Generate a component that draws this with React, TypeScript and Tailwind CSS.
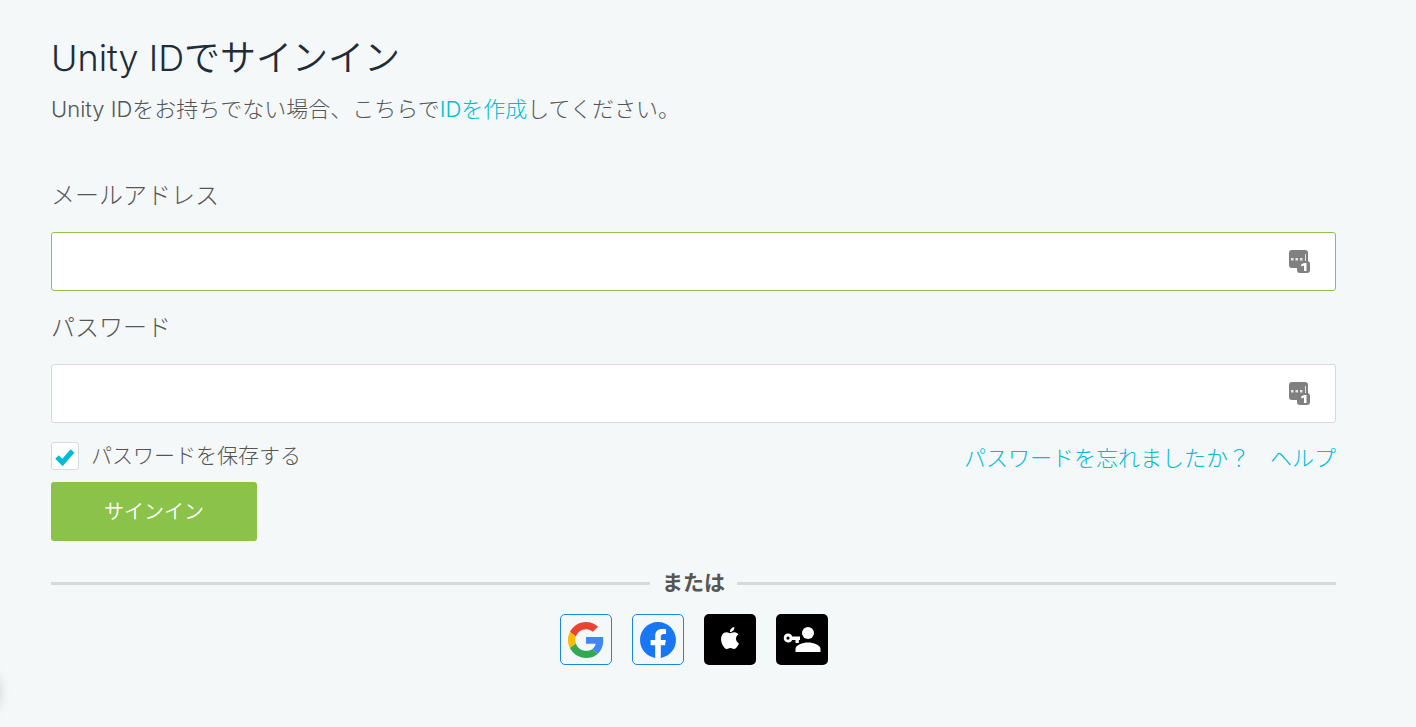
import React, { useState } from 'react';

const PasswordManagerIcon: React.FC = () => (
  <svg width="22" height="24" viewBox="0 0 22 24" aria-hidden="true">
    <path
      d="M3 0h13a3 3 0 0 1 3 3v8h0a3 3 0 0 1 2 3v6a3 3 0 0 1-3 3h-7a3 3 0 0 1-3-3v-2H3a3 3 0 0 1-3-3V3a3 3 0 0 1 3-3z"
      fill="#808080"
    />
    <path d="M2 8h2.500v2.500H2zM6.500 8H9v2.500H6.500zM11 8h2.500v2.500H11zM16 4h1v7h-1z" fill="#e6e6e6" />
    <path d="M12 14.500L15 13h2.500v8h-2.500v-5.500l-2.500 1z" fill="#ffffff" />
  </svg>
);

const GoogleIcon: React.FC = () => (
  <svg width="36" height="36" viewBox="0 0 48 48" aria-hidden="true">
    <path fill="#EA4335" d="M24 9.500c3.540 0 6.710 1.220 9.210 3.600l6.850-6.850C35.900 2.380 30.470 0 24 0 14.620 0 6.510 5.380 2.560 13.220l7.980 6.190C12.430 13.720 17.740 9.500 24 9.500z" />
    <path fill="#4285F4" d="M46.980 24.550c0-1.570-.15-3.090-.38-4.550H24v9.020h12.940c-.58 2.960-2.260 5.480-4.780 7.180l7.730 6c4.510-4.180 7.090-10.360 7.090-17.650z" />
    <path fill="#FBBC05" d="M10.530 28.590c-.48-1.450-.76-2.990-.76-4.590s.27-3.140.76-4.590l-7.980-6.190C.92 16.460 0 20.120 0 24c0 3.880.92 7.540 2.560 10.780l7.970-6.190z" />
    <path fill="#34A853" d="M24 48c6.480 0 11.930-2.130 15.890-5.810l-7.730-6c-2.150 1.450-4.920 2.300-8.160 2.300-6.260 0-11.570-4.220-13.470-9.910l-7.980 6.190C6.510 42.620 14.620 48 24 48z" />
  </svg>
);

const FacebookIcon: React.FC = () => (
  <svg width="36" height="36" viewBox="0 0 24 24" aria-hidden="true">
    <circle cx="12" cy="12" r="11.500" fill="#ffffff" />
    <path
      fill="#1877F2"
      d="M24 12.073C24 5.405 18.627 0 12 0S0 5.405 0 12.073C0 18.100 4.388 23.094 10.125 24v-8.437H7.078v-3.490h3.047v-2.660c0-3.025 1.792-4.697 4.533-4.697 1.312 0 2.686.236 2.686.236v2.971H15.830c-1.491 0-1.956.93-1.956 1.886v2.264h3.328l-.532 3.490h-2.796V24C19.612 23.094 24 18.100 24 12.073z"
    />
  </svg>
);

const AppleIcon: React.FC = () => (
  <svg width="22" height="22" viewBox="0 0 24 24" aria-hidden="true">
    <path
      fill="#ffffff"
      d="M12.152 6.896c-.948 0-2.415-1.078-3.960-1.040-2.040.027-3.910 1.183-4.961 3.014-2.117 3.675-.546 9.103 1.519 12.090 1.013 1.454 2.208 3.090 3.792 3.039 1.520-.065 2.090-.987 3.935-.987 1.831 0 2.350.987 3.960.948 1.637-.026 2.676-1.480 3.676-2.948 1.156-1.688 1.636-3.325 1.662-3.415-.039-.013-3.182-1.221-3.220-4.857-.026-3.040 2.480-4.494 2.597-4.559-1.429-2.090-3.623-2.324-4.390-2.376-2-.156-3.675 1.090-4.610 1.090zM15.530 3.830c.843-1.012 1.400-2.427 1.245-3.830-1.207.052-2.662.805-3.532 1.818-.78.896-1.454 2.338-1.273 3.714 1.338.104 2.715-.688 3.559-1.701"
    />
  </svg>
);

const PasskeyIcon: React.FC = () => (
  <svg width="38" height="26" viewBox="0 0 38 26" fill="#ffffff" aria-hidden="true">
    <circle cx="25" cy="6" r="6" />
    <path d="M12.500 25v-3c0-4 7-6.500 12.500-6.500s12.500 2.500 12.500 6.500v3z" />
    <path
      fillRule="evenodd"
      d="M5 6.500a4.500 4.500 0 0 1 4.300 3H17v3.500h-1.200V16h-3.300v-3H9.300A4.500 4.500 0 1 1 5 6.500zm0 3a1.600 1.600 0 1 0 0 3.200 1.600 1.600 0 0 0 0-3.200z"
    />
  </svg>
);

const providers = [
  { name: 'Google', icon: <GoogleIcon />, style: 'border border-[#1a86e8]' },
  { name: 'Facebook', icon: <FacebookIcon />, style: 'border border-[#1a86e8]' },
  { name: 'Apple', icon: <AppleIcon />, style: 'bg-black pb-1' },
  { name: 'Passkey', icon: <PasskeyIcon />, style: 'bg-black' },
];

const fields = [
  { id: 'email', label: 'メールアドレス', type: 'email', border: 'border-[#8bc34a]' },
  { id: 'password', label: 'パスワード', type: 'password', border: 'border-[#d5dbdd]' },
];

const App: React.FC = () => {
  const [remember, setRemember] = useState(true);

  return (
    <div className="relative min-h-screen overflow-hidden bg-[#f4f8f9] pt-[31px] pr-20 pb-14 pl-[51px] font-['Inter','Noto_Sans_CJK_JP',sans-serif] font-light text-[#555555]">
      {/* Edge of the floating bubble parked outside the page */}
      <div className="absolute top-[670px] -left-12 h-11 w-11 rounded-full shadow-[0_0_14px_rgba(0,0,0,0.35)]"></div>

      <h1 className="text-[36px] leading-[54px] font-[350] text-[#212c37]">Unity IDでサインイン</h1>
      <p className="mt-2 text-[22px] leading-8">
        Unity IDをお持ちでない場合、こちらで
        <a href="#create" className="text-[#00bcd4]">IDを作成</a>
        してください。
      </p>

      <form className="mt-[34px]" onSubmit={(e) => e.preventDefault()}>
        {fields.map((field) => (
          <div key={field.id} className="pt-[19px]">
            <label htmlFor={field.id} className="block text-[24px] leading-9">{field.label}</label>
            <div className="relative mt-[18px]">
              <input
                id={field.id}
                type={field.type}
                className={`block h-[59px] w-full rounded-[3px] border bg-white pr-16 pl-5 text-[22px] outline-none ${field.border}`}
              />
              <span className="absolute top-[18px] right-[25px]">
                <PasswordManagerIcon />
              </span>
            </div>
          </div>
        ))}

        <div className="mt-[19px] flex items-end justify-between">
          <label className="flex items-center gap-3 text-[21px] leading-7">
            <span className="relative block h-7 w-7">
              <input
                type="checkbox"
                checked={remember}
                onChange={(e) => setRemember(e.target.checked)}
                className="block h-7 w-7 appearance-none rounded-[3px] border border-[#d5dbdd] bg-white"
              />
              {remember && (
                <svg className="pointer-events-none absolute top-1.5 left-1" width="20" height="18" viewBox="0 0 20 18" aria-hidden="true">
                  <path d="M2 9l5.500 5.500L17.500 3" fill="none" stroke="#00bcd4" strokeWidth="5" />
                </svg>
              )}
            </span>
            パスワードを保存する
          </label>
          <div className="flex gap-5 text-[22px] leading-6 text-[#00bcd4]">
            <a href="#forgot">パスワードを忘れましたか？</a>
            <a href="#help">ヘルプ</a>
          </div>
        </div>

        <button type="submit" className="mt-3 block h-[59px] w-[206px] rounded-[3px] bg-[#8bc34a] text-[20px] font-[350] text-white">
          サインイン
        </button>
      </form>

      <div className="mt-[26px] flex items-center gap-3 text-[21px] leading-8 font-bold">
        <span className="h-[3px] flex-1 bg-[#d5dbdd]"></span>
        または
        <span className="h-[3px] flex-1 bg-[#d5dbdd]"></span>
      </div>

      <div className="mt-[15px] flex justify-center gap-5">
        {providers.map((provider) => (
          <button
            key={provider.name}
            type="button"
            aria-label={provider.name}
            className={`flex h-[51px] w-[52px] items-center justify-center rounded-[5px] ${provider.style}`}
          >
            {provider.icon}
          </button>
        ))}
      </div>
    </div>
  );
};

export default App;
